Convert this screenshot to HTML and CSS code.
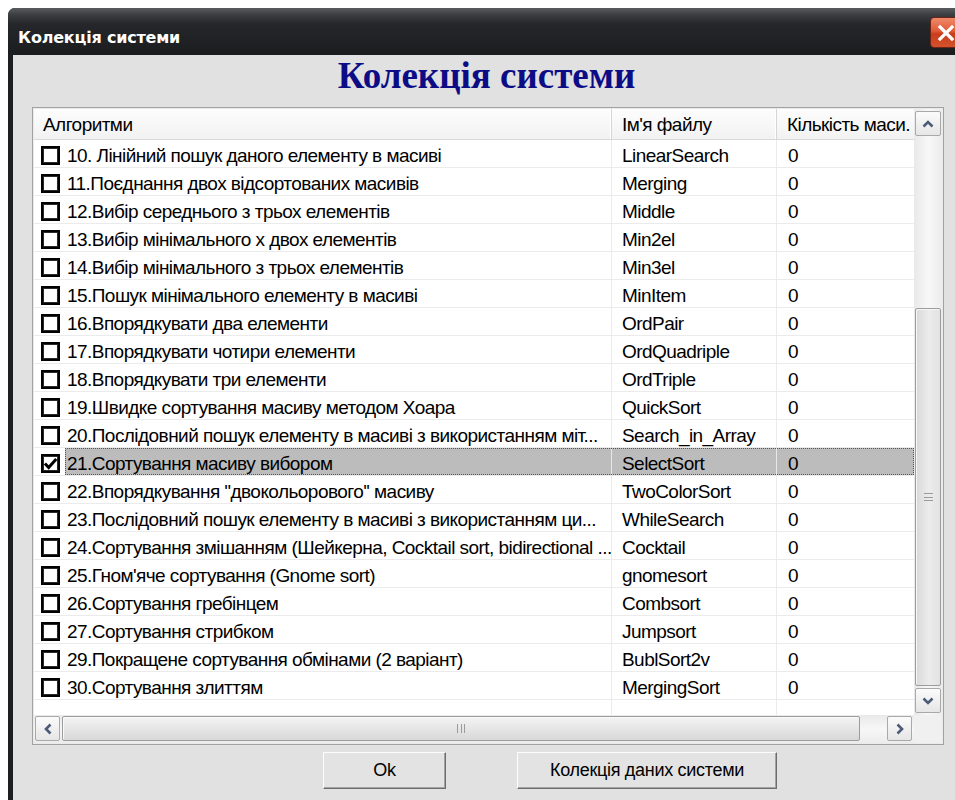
FILE: index.html
```html
<!DOCTYPE html>
<html lang="uk">
<head>
<meta charset="utf-8">
<title>Колекція системи</title>
<link rel="stylesheet" href="styles.css">
</head>
<body>
<div class="window">
  <div class="titlebar">
    <span class="title">Колекція системи</span>
    <span class="close">
      <svg width="20" height="20" viewBox="0 0 20 20"><path d="M4 4 L16 16 M16 4 L4 16" stroke="#fff" stroke-width="3.2" stroke-linecap="square"/></svg>
    </span>
  </div>
  <div class="client">
    <h1 class="heading">Колекція системи</h1>

    <div class="listbox">
      <div class="table">
        <div class="thead">
          <div class="th">Алгоритми</div>
          <div class="th">Ім'я файлу</div>
          <div class="th">Кількість маси.</div>
        </div>

        <div class="row"><div class="chk"><span class="box"></span></div><div class="data"><div class="c1">10. Лінійний пошук даного елементу в масиві</div><div class="c2">LinearSearch</div><div class="c3">0</div></div></div>
        <div class="row"><div class="chk"><span class="box"></span></div><div class="data"><div class="c1">11.Поєднання двох відсортованих масивів</div><div class="c2">Merging</div><div class="c3">0</div></div></div>
        <div class="row"><div class="chk"><span class="box"></span></div><div class="data"><div class="c1">12.Вибір середнього з трьох елементів</div><div class="c2">Middle</div><div class="c3">0</div></div></div>
        <div class="row"><div class="chk"><span class="box"></span></div><div class="data"><div class="c1">13.Вибір мінімального х двох елементів</div><div class="c2">Min2el</div><div class="c3">0</div></div></div>
        <div class="row"><div class="chk"><span class="box"></span></div><div class="data"><div class="c1">14.Вибір мінімального з трьох елементів</div><div class="c2">Min3el</div><div class="c3">0</div></div></div>
        <div class="row"><div class="chk"><span class="box"></span></div><div class="data"><div class="c1">15.Пошук мінімального елементу в масиві</div><div class="c2">MinItem</div><div class="c3">0</div></div></div>
        <div class="row"><div class="chk"><span class="box"></span></div><div class="data"><div class="c1">16.Впорядкувати два елементи</div><div class="c2">OrdPair</div><div class="c3">0</div></div></div>
        <div class="row"><div class="chk"><span class="box"></span></div><div class="data"><div class="c1">17.Впорядкувати чотири елементи</div><div class="c2">OrdQuadriple</div><div class="c3">0</div></div></div>
        <div class="row"><div class="chk"><span class="box"></span></div><div class="data"><div class="c1">18.Впорядкувати три елементи</div><div class="c2">OrdTriple</div><div class="c3">0</div></div></div>
        <div class="row"><div class="chk"><span class="box"></span></div><div class="data"><div class="c1">19.Швидке сортування масиву методом Хоара</div><div class="c2">QuickSort</div><div class="c3">0</div></div></div>
        <div class="row"><div class="chk"><span class="box"></span></div><div class="data"><div class="c1">20.Послідовний пошук елементу в масиві з використанням міт...</div><div class="c2">Search_in_Array</div><div class="c3">0</div></div></div>
        <div class="row"><div class="chk"><span class="box checked"><svg width="15" height="15" viewBox="0 0 14 14"><path d="M1.8 7 L5.3 10.8 L12.4 2.8" fill="none" stroke="#000" stroke-width="2.8"/></svg></span></div><div class="data selected"><div class="c1">21.Сортування масиву вибором</div><div class="c2">SelectSort</div><div class="c3">0</div></div></div>
        <div class="row"><div class="chk"><span class="box"></span></div><div class="data"><div class="c1">22.Впорядкування ''двокольорового'' масиву</div><div class="c2">TwoColorSort</div><div class="c3">0</div></div></div>
        <div class="row"><div class="chk"><span class="box"></span></div><div class="data"><div class="c1">23.Послідовний пошук елементу в масиві з використанням ци...</div><div class="c2">WhileSearch</div><div class="c3">0</div></div></div>
        <div class="row"><div class="chk"><span class="box"></span></div><div class="data"><div class="c1">24.Сортування змішанням (Шейкерна, Cocktail sort, bidirectional ...</div><div class="c2">Cocktail</div><div class="c3">0</div></div></div>
        <div class="row"><div class="chk"><span class="box"></span></div><div class="data"><div class="c1">25.Гном'яче сортування (Gnome sort)</div><div class="c2">gnomesort</div><div class="c3">0</div></div></div>
        <div class="row"><div class="chk"><span class="box"></span></div><div class="data"><div class="c1">26.Сортування гребінцем</div><div class="c2">Combsort</div><div class="c3">0</div></div></div>
        <div class="row"><div class="chk"><span class="box"></span></div><div class="data"><div class="c1">27.Сортування стрибком</div><div class="c2">Jumpsort</div><div class="c3">0</div></div></div>
        <div class="row"><div class="chk"><span class="box"></span></div><div class="data"><div class="c1">29.Покращене сортування обмінами (2 варіант)</div><div class="c2">BublSort2v</div><div class="c3">0</div></div></div>
        <div class="row"><div class="chk"><span class="box"></span></div><div class="data"><div class="c1">30.Сортування злиттям</div><div class="c2">MergingSort</div><div class="c3">0</div></div></div>

        <div class="filler"><div class="f1"></div><div class="f2"></div><div class="f3"></div></div>
      </div>

      <div class="vscroll">
        <div class="sbtn">
          <svg width="14" height="10" viewBox="0 0 14 10"><path d="M2.5 7.5 L7 3 L11.5 7.5" fill="none" stroke="#4b5b78" stroke-width="2.6"/></svg>
        </div>
        <div class="vtrack">
          <div class="vspace"></div>
          <div class="vthumb"><span class="grip-h"></span></div>
        </div>
        <div class="sbtn">
          <svg width="14" height="10" viewBox="0 0 14 10"><path d="M2.5 2.5 L7 7 L11.5 2.5" fill="none" stroke="#4b5b78" stroke-width="2.6"/></svg>
        </div>
      </div>

      <div class="hscroll">
        <div class="sbtn">
          <svg width="10" height="14" viewBox="0 0 10 14"><path d="M7.5 2.5 L3 7 L7.5 11.5" fill="none" stroke="#4b5b78" stroke-width="2.6"/></svg>
        </div>
        <div class="hthumb"><span class="grip-v"></span></div>
        <div class="hspace"></div>
        <div class="sbtn">
          <svg width="10" height="14" viewBox="0 0 10 14"><path d="M2.5 2.5 L7 7 L2.5 11.5" fill="none" stroke="#4b5b78" stroke-width="2.6"/></svg>
        </div>
      </div>

      <div class="corner"></div>
    </div>

    <div class="buttons">
      <button class="btn btn-ok">Ok</button>
      <button class="btn btn-data">Колекція даних системи</button>
    </div>
  </div>
</div>
</body>
</html>
```

FILE: styles.css
```css
* {
  box-sizing: border-box;
}

html,
body {
  margin: 0;
  padding: 0;
  background: #fff;
  overflow: hidden;
}

body {
  width: 955px;
  height: 800px;
  font-family: "Liberation Sans", Arial, sans-serif;
}

/* window frame */
.window {
  margin: 8px 0 0 8px;
  width: 957px;
  height: 800px;
  border-radius: 7px 7px 0 0;
  background: #1d1e20;
  display: flex;
  flex-direction: column;
  overflow: hidden;
}

.titlebar {
  height: 47px;
  flex: none;
  display: flex;
  align-items: flex-start;
  padding-left: 10px;
  background: linear-gradient(#5a5b5e 0, #3c3d40 7px, #26272a 16px, #1b1c1e 100%);
}

.title {
  color: #fff;
  font: bold 16px "DejaVu Sans", sans-serif;
  letter-spacing: -0.2px;
  margin-top: 20px;
}

.close {
  margin-left: auto;
  margin-right: 4px;
  margin-top: 9px;
  width: 31px;
  height: 31px;
  border-radius: 4px;
  border: 1px solid #6e2414;
  background: linear-gradient(#ef8a6a 0, #e05a36 45%, #c83d1c 55%, #d4532c 100%);
  display: flex;
  align-items: center;
  justify-content: center;
}

.client {
  flex: 1;
  margin: 0 5px;
  background: #e1e1e1;
  display: flex;
  flex-direction: column;
}

.heading {
  margin: 0;
  height: 52px;
  text-align: center;
  font: bold 37px "Liberation Serif", "Times New Roman", serif;
  line-height: 42px;
  color: #0c0c86;
}

/* list view with its scroll bars */
.listbox {
  margin-left: 19px;
  width: 912px;
  height: 638px;
  border: 1px solid #a2a2a2;
  padding: 1px;
  background: #eaeaea;
  display: grid;
  grid-template-columns: 1fr 28px;
  grid-template-rows: 1fr 28px;
}

.table {
  background: #fff;
  overflow: hidden;
  display: flex;
  flex-direction: column;
  font-size: 19px;
  letter-spacing: -0.55px;
  color: #000;
}

.thead {
  height: 31px;
  flex: none;
  display: grid;
  grid-template-columns: 578px 165px 1fr;
  background: linear-gradient(#fdfdfd, #f2f2f2);
  border-bottom: 1px solid #d8d8d8;
}

.th {
  padding: 4px 0 0 9px;
  line-height: 24px;
  white-space: nowrap;
  overflow: hidden;
  border-right: 1px solid #d6d6d6;
  box-shadow: inset -1px 0 #fff;
}

.th:nth-child(2) {
  padding-left: 10px;
}

.th:last-child {
  border-right: 0;
  box-shadow: none;
  padding-left: 10px;
}

.row {
  height: 28px;
  flex: none;
  display: flex;
  border-bottom: 1px solid #ebebeb;
}

.chk {
  width: 31px;
  flex: none;
  padding: 6px 0 0 7px;
}

.box {
  display: flex;
  align-items: center;
  justify-content: center;
  width: 19px;
  height: 19px;
  border: 2px solid #000;
  box-shadow: inset 0 0 0 1px #2a2a2a;
  background: #fff;
}

.data {
  flex: 1;
  display: grid;
  grid-template-columns: 547px 165px 1fr;
}

.data > div {
  padding-top: 4px;
  line-height: 23px;
  white-space: nowrap;
  overflow: hidden;
}

.c1 {
  padding-left: 2px;
  border-right: 1px solid #ebebeb;
}

.c2 {
  padding-left: 10px;
  border-right: 1px solid #ebebeb;
}

.c3 {
  padding-left: 11px;
}

.data.selected {
  background: #bcbcbc;
  outline: 1px dotted #555;
  outline-offset: -1px;
}

.data.selected .c1,
.data.selected .c2 {
  border-right-color: #e8e8e8;
}

.filler {
  flex: 1;
  display: grid;
  grid-template-columns: 578px 165px 1fr;
}

.f1,
.f2 {
  border-right: 1px solid #ebebeb;
}

/* scroll bars */
.sbtn {
  flex: none;
  display: flex;
  align-items: center;
  justify-content: center;
  border: 1px solid #a9a9a9;
  border-radius: 2px;
  background: linear-gradient(#fbfbfb, #e6e6e6);
}

.vscroll {
  display: flex;
  flex-direction: column;
  padding: 2px 1px;
  background: linear-gradient(90deg, #e9e9e9, #f7f7f7 50%, #ececec);
}

.vscroll .sbtn {
  height: 25px;
}

.vtrack {
  flex: 1;
  display: flex;
  flex-direction: column;
}

.vspace {
  height: 172px;
  flex: none;
}

.vthumb {
  flex: 1;
  margin-bottom: 2px;
  border: 1px solid #9c9c9c;
  border-radius: 2px;
  background: linear-gradient(90deg, #d9d9d9, #ececec 55%, #e2e2e2);
  box-shadow: inset 1px 1px #f6f6f6;
  display: flex;
  align-items: center;
  justify-content: center;
}

.grip-h {
  width: 9px;
  height: 8px;
  border-top: 1px solid #9a9a9a;
  border-bottom: 1px solid #9a9a9a;
  background: linear-gradient(#9a9a9a, #9a9a9a) center / 9px 1px no-repeat;
}

.hscroll {
  display: flex;
  padding: 1px 2px 2px 1px;
  background: linear-gradient(#e9e9e9, #f7f7f7 50%, #ececec);
}

.hscroll .sbtn {
  width: 25px;
}

.hthumb {
  width: 798px;
  margin-left: 2px;
  border: 1px solid #9c9c9c;
  border-radius: 2px;
  background: linear-gradient(#f4f4f4, #e6e6e6 50%, #d8d8d8);
  box-shadow: inset 1px 1px #fafafa;
  display: flex;
  align-items: center;
  justify-content: center;
}

.grip-v {
  width: 8px;
  height: 9px;
  border-left: 1px solid #9a9a9a;
  border-right: 1px solid #9a9a9a;
  background: linear-gradient(#9a9a9a, #9a9a9a) center / 1px 9px no-repeat;
}

.hspace {
  flex: 1;
}

.corner {
  background: #f0f0f0;
}

/* dialog buttons */
.buttons {
  display: flex;
  margin-top: 7px;
  padding-left: 310px;
  gap: 71px;
}

.btn {
  height: 37px;
  font: 18px "Liberation Sans", Arial, sans-serif;
  letter-spacing: -0.3px;
  color: #000;
  background: #e3e3e3;
  border: 1px solid;
  border-color: #fdfdfd #6c6c6c #6c6c6c #fdfdfd;
  box-shadow: inset -1px -1px #a3a3a3;
  padding: 0;
}

.btn-ok {
  width: 123px;
}

.btn-data {
  width: 260px;
}
```
